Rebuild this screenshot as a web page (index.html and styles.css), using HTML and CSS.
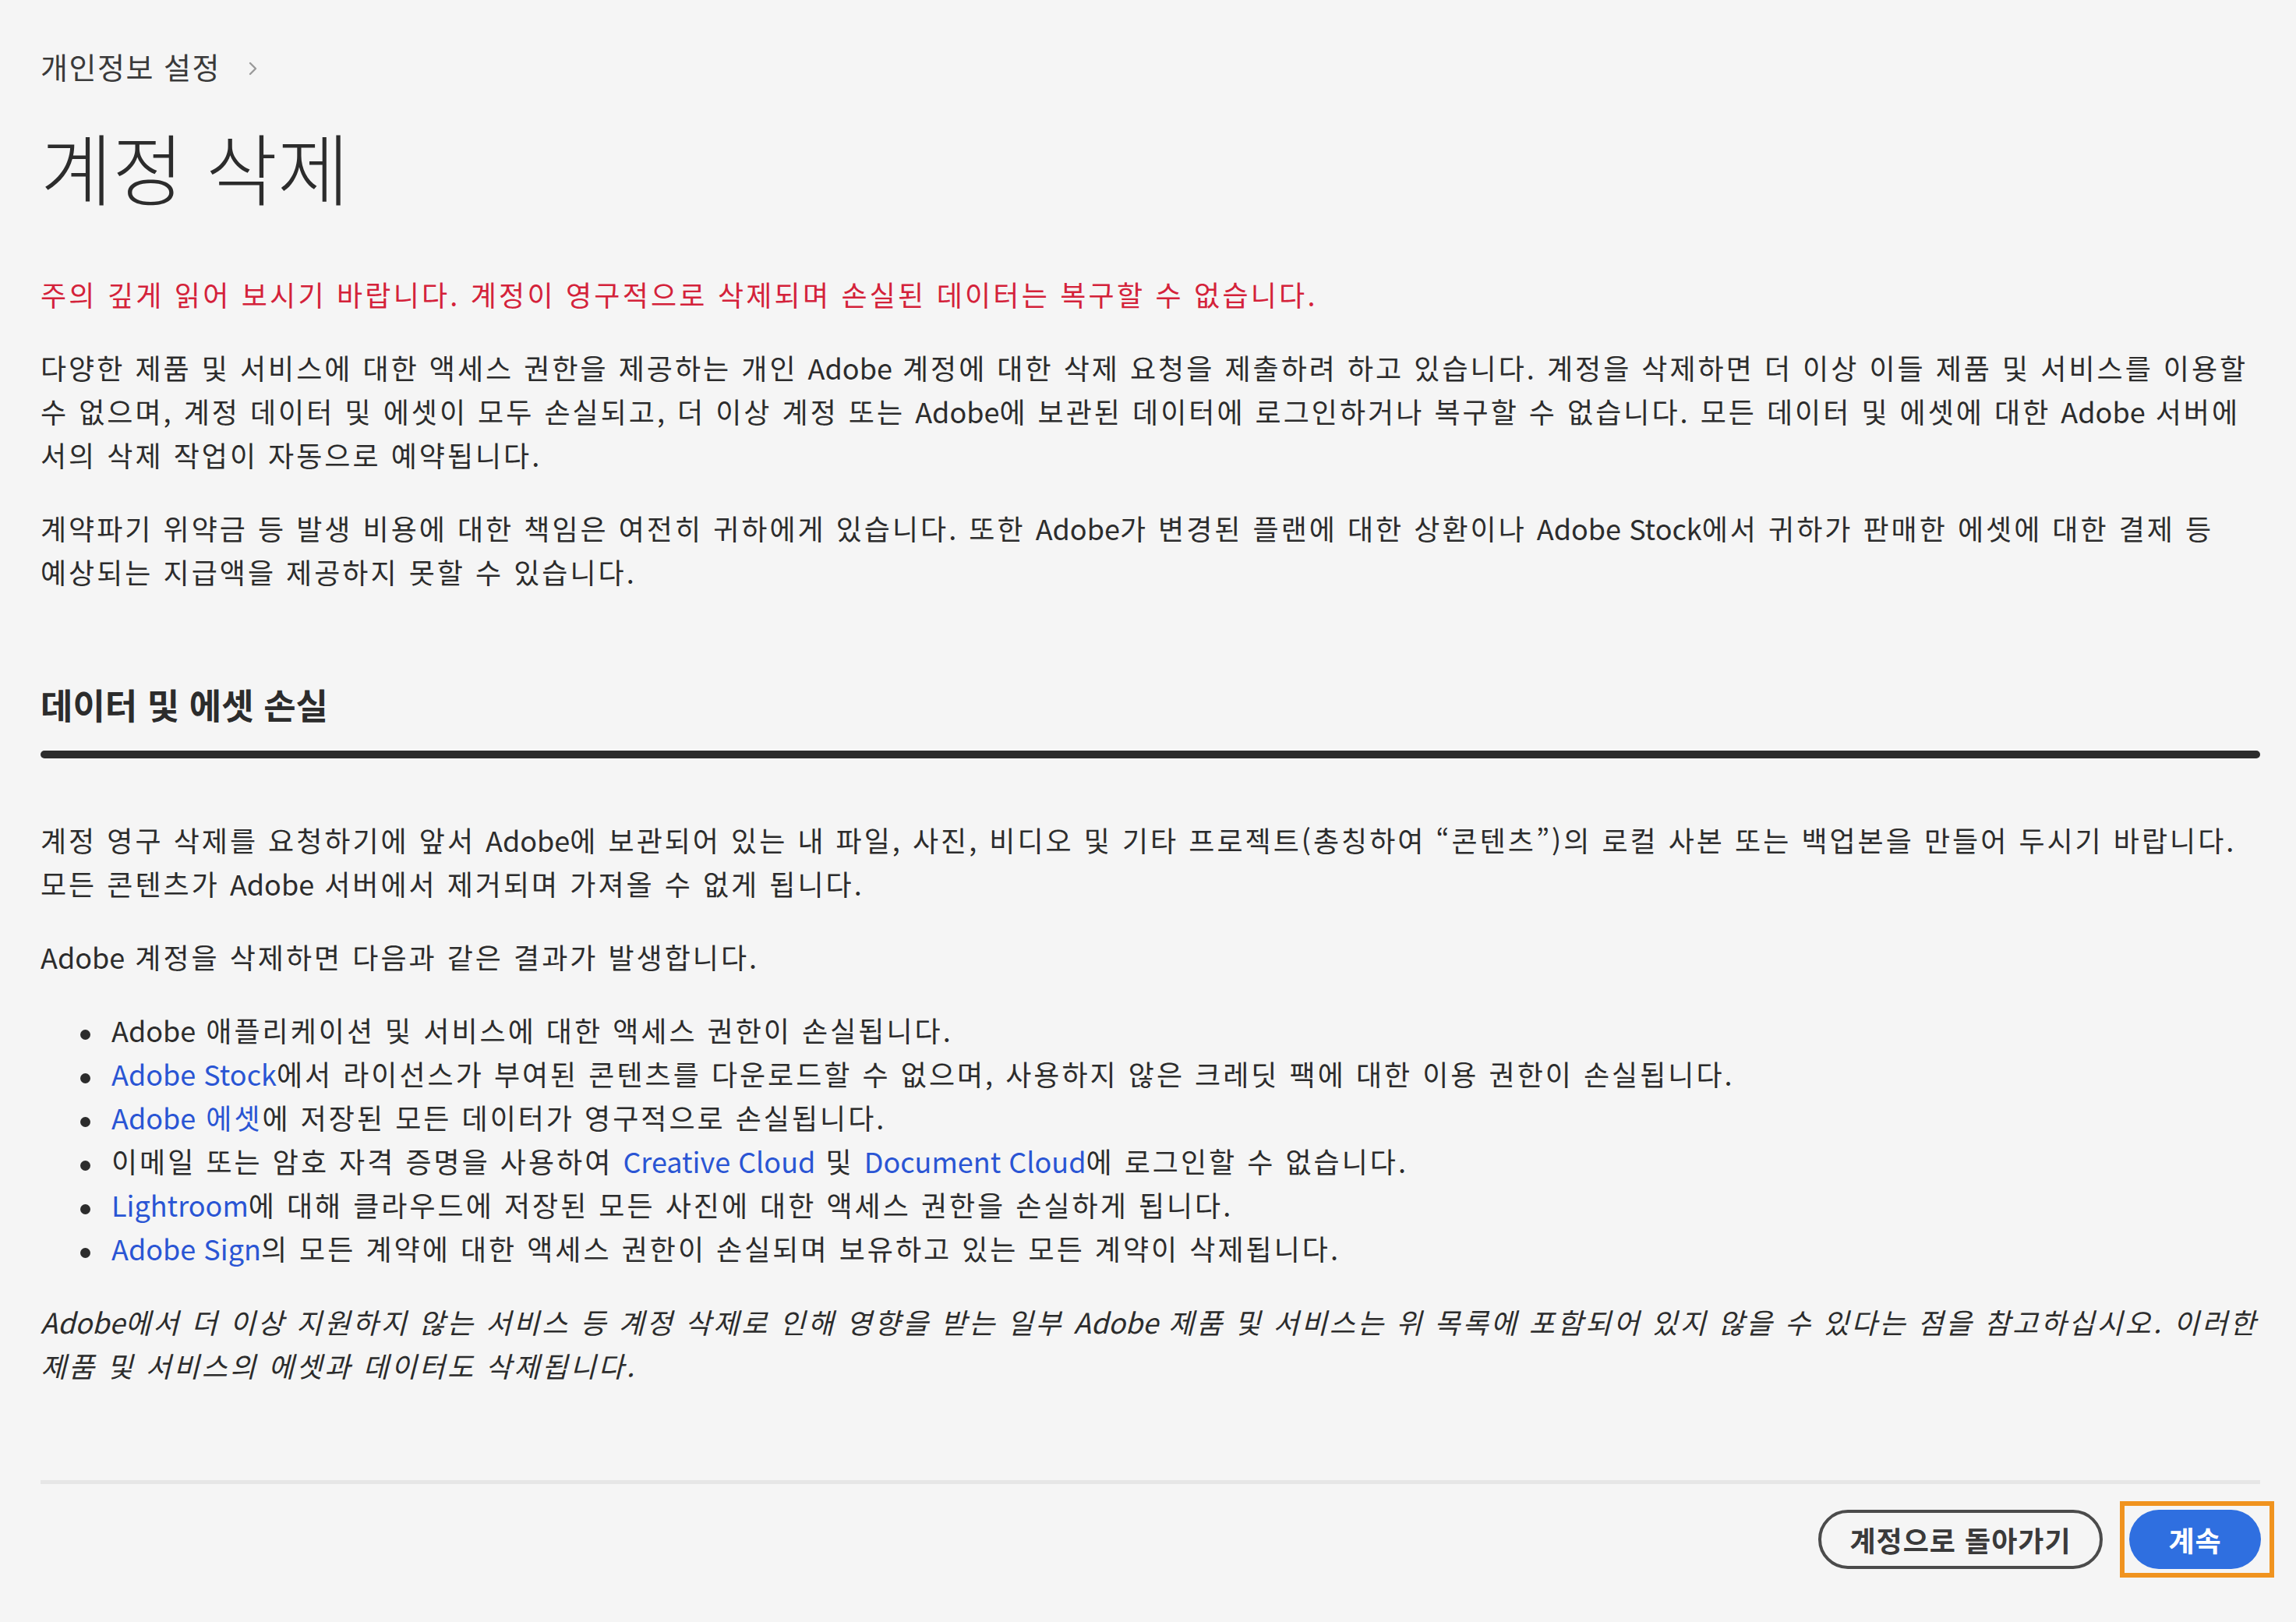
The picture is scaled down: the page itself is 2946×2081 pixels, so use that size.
FILE: index.html
```html
<!DOCTYPE html>
<html lang="ko">
<head>
<meta charset="utf-8">
<title>계정 삭제</title>
<link rel="stylesheet" href="styles.css">
</head>
<body>
<main class="page">
  <nav class="crumbs">
    <span class="crumb">개인정보 설정</span>
    <svg class="chev" width="14" height="20" viewBox="0 0 14 20"><path d="M3 3 L10 10 L3 17" fill="none" stroke="#9a9a9a" stroke-width="2.4" stroke-linecap="round" stroke-linejoin="round"/></svg>
  </nav>
  <h1 class="title">계정 삭제</h1>

  <p class="warn">주의 깊게 읽어 보시기 바랍니다. 계정이 영구적으로 삭제되며 손실된 데이터는 복구할 수 없습니다.</p>
  <p class="txt">다양한 제품 및 서비스에 대한 액세스 권한을 제공하는 개인 <span class="en">Adobe</span> 계정에 대한 삭제 요청을 제출하려 하고 있습니다. 계정을 삭제하면 더 이상 이들 제품 및 서비스를 이용할 수 없으며, 계정 데이터 및 에셋이 모두 손실되고, 더 이상 계정 또는 <span class="en">Adobe</span>에 보관된 데이터에 로그인하거나 복구할 수 없습니다. 모든 데이터 및 에셋에 대한 <span class="en">Adobe</span> 서버에서의 삭제 작업이 자동으로 예약됩니다.</p>
  <p class="txt keep">계약파기 위약금 등 발생 비용에 대한 책임은 여전히 귀하에게 있습니다. 또한 <span class="en">Adobe</span>가 변경된 플랜에 대한 상환이나 <span class="en">Adobe Stock</span>에서 귀하가 판매한 에셋에 대한 결제 등 예상되는 지급액을 제공하지 못할 수 있습니다.</p>

  <h2 class="section">데이터 및 에셋 손실</h2>
  <div class="rule"></div>

  <p class="txt first">계정 영구 삭제를 요청하기에 앞서 <span class="en">Adobe</span>에 보관되어 있는 내 파일, 사진, 비디오 및 기타 프로젝트(총칭하여 “콘텐츠”)의 로컬 사본 또는 백업본을 만들어 두시기 바랍니다. 모든 콘텐츠가 <span class="en">Adobe</span> 서버에서 제거되며 가져올 수 없게 됩니다.</p>
  <p class="txt"><span class="en">Adobe</span> 계정을 삭제하면 다음과 같은 결과가 발생합니다.</p>
  <ul class="list">
    <li><span class="en">Adobe</span> 애플리케이션 및 서비스에 대한 액세스 권한이 손실됩니다.</li>
    <li><a class="lnk en">Adobe Stock</a>에서 라이선스가 부여된 콘텐츠를 다운로드할 수 없으며, 사용하지 않은 크레딧 팩에 대한 이용 권한이 손실됩니다.</li>
    <li><a class="lnk"><span class="en">Adobe</span> 에셋</a>에 저장된 모든 데이터가 영구적으로 손실됩니다.</li>
    <li>이메일 또는 암호 자격 증명을 사용하여 <a class="lnk en">Creative Cloud</a> 및 <a class="lnk en">Document Cloud</a>에 로그인할 수 없습니다.</li>
    <li><a class="lnk en">Lightroom</a>에 대해 클라우드에 저장된 모든 사진에 대한 액세스 권한을 손실하게 됩니다.</li>
    <li><a class="lnk en">Adobe Sign</a>의 모든 계약에 대한 액세스 권한이 손실되며 보유하고 있는 모든 계약이 삭제됩니다.</li>
  </ul>
  <p class="txt note"><span class="en">Adobe</span>에서 더 이상 지원하지 않는 서비스 등 계정 삭제로 인해 영향을 받는 일부 <span class="en">Adobe</span> 제품 및 서비스는 위 목록에 포함되어 있지 않을 수 있다는 점을 참고하십시오. 이러한 제품 및 서비스의 에셋과 데이터도 삭제됩니다.</p>

  <div class="divider"></div>
  <div class="actions">
    <button class="btn btn-outline">계정으로 돌아가기</button>
    <span class="focus"><button class="btn btn-primary">계속</button></span>
  </div>
</main>
</body>
</html>
```

FILE: styles.css
```css
html, body {
  margin: 0;
  padding: 0;
  background: #f5f5f5;
}
body {
  font-family: "Noto Sans CJK KR", "Noto Sans", sans-serif;
  color: #2c2c2c;
}
.page {
  padding: 61px 46px 0 52px;
}
.crumbs {
  display: flex;
  align-items: center;
  gap: 35px;
  height: 48px;
}
.crumb {
  font-size: 38px;
  line-height: 48px;
  letter-spacing: 1.5px;
  color: #3a3a3a;
}
.chev {
  margin-top: 6px;
}
.title {
  margin: 48px 0 0 0;
  font-size: 100px;
  line-height: 112px;
  font-weight: 300;
  color: #2c2c2c;
}
.warn, .txt, .list {
  font-size: 36px;
  line-height: 56px;
  letter-spacing: 3px;
  margin: 38px 0 0 0;
}
.warn {
  margin-top: 80px;
  letter-spacing: 3.2px;
  color: #d4223a;
}
.keep {
  word-break: keep-all;
}
.en {
  letter-spacing: 0;
}
.section {
  margin: 115px 0 0 0;
  font-size: 45px;
  line-height: 56px;
  font-weight: 700;
}
.rule {
  margin-top: 31px;
  height: 10px;
  border-radius: 5px;
  background: #2c2c2c;
}
.txt.first {
  margin-top: 76px;
}
.list {
  padding: 0 0 0 94px;
  list-style: none;
}
.list li::before {
  content: "";
  display: inline-block;
  width: 13px;
  height: 13px;
  border-radius: 50%;
  background: #2c2c2c;
  margin-left: -43px;
  margin-right: 27px;
  vertical-align: middle;
}
.lnk {
  color: #2a55d4;
  text-decoration: none;
}
.note {
  font-style: italic;
}
.divider {
  margin-top: 120px;
  height: 5px;
  background: #e6e6e6;
}
.actions {
  display: flex;
  justify-content: flex-end;
  align-items: center;
  gap: 22px;
  margin-top: 22px;
}
.btn {
  font-family: "Noto Sans CJK KR", "Noto Sans", sans-serif;
  font-size: 36px;
  font-weight: 700;
  height: 76px;
  border-radius: 38px;
  box-sizing: border-box;
  cursor: pointer;
  letter-spacing: 1px;
}
.btn-outline {
  background: transparent;
  border: 4px solid #4b4b4b;
  color: #3a3a3a;
  width: 365px;
}
.btn-primary {
  background: #2f6fe0;
  border: none;
  color: #ffffff;
  width: 169px;
  display: block;
}
.focus {
  display: block;
  border: 6px solid #f0931f;
  padding: 5px 11px 5px 6px;
  margin-right: -18px;
}
```
